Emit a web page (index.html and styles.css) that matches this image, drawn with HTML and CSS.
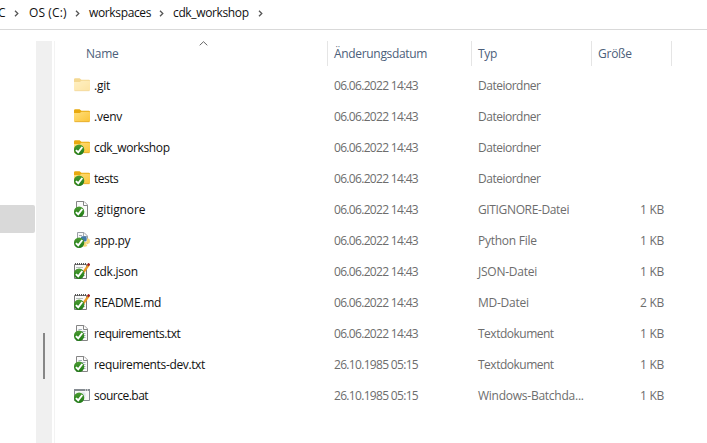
FILE: index.html
```
<!DOCTYPE html>
<html lang="de">
<head>
<meta charset="utf-8">
<title>cdk_workshop</title>
<link rel="stylesheet" href="styles.css">
</head>
<body>
<svg class="defs" aria-hidden="true">
  <defs>
    <linearGradient id="gold" x1="0" y1="0" x2="1" y2="1"><stop offset="0" stop-color="#ffdf7c"/><stop offset="1" stop-color="#fbc437"/></linearGradient>
    <linearGradient id="green" x1="0" y1="0" x2="0" y2="1"><stop offset="0" stop-color="#4c9c32"/><stop offset="1" stop-color="#1f7a16"/></linearGradient>
    <symbol id="folder" viewBox="0 0 16 16">
      <path d="M0 2.5Q0 1.2 1.3 1.2H5.6L7.4 2.8H14.8Q16 2.8 16 4V8H0Z" fill="#e8a90f"/>
      <path d="M0 5.1H5.8L7.6 3.7H15Q16 3.7 16 4.7V12.8Q16 14 14.8 14H1.2Q0 14 0 12.8Z" fill="url(#gold)"/>
      <path d="M.6 13.7H15.4" stroke="#dfa52b" stroke-width=".7"/>
    </symbol>
    <symbol id="check" viewBox="0 0 16 16">
      <circle cx="5.1" cy="10.7" r="5.2" fill="url(#green)"/>
      <path d="M1.9 11.1L4.2 13.3L8.3 8" fill="none" stroke="#fff" stroke-width="1.9"/>
    </symbol>
    <symbol id="page" viewBox="0 0 16 16">
      <path d="M2.5.5H10L13.5 4V15.5H2.5Z" fill="#fafafa" stroke="#858585"/>
      <path d="M9.5.5V4.5H13.5" fill="#fff" stroke="#858585"/>
    </symbol>
    <symbol id="lines" viewBox="0 0 16 16">
      <path d="M4.5 4.5H8M4.5 6.5H11.5M4.5 8.5H11.5M4.5 10.5H11.5M4.5 12.5H11.5" stroke="#a6b2bd"/>
    </symbol>
    <symbol id="python" viewBox="0 0 16 16">
      <path d="M3.5 9V.5H10L13.5 4V12" fill="#f7f8f9" stroke="#9a9fa5"/>
      <path d="M9.5.5V4.5H13.5M5 3.5H8" fill="none" stroke="#a5abb0"/>
      <path d="M7 5.2Q7 4.2 9 4.2H11Q12.7 4.2 12.7 6V8.2Q12.7 9.5 11 9.5H6V6.3H7Z" fill="#4179a8"/>
      <path d="M13 6.6H14.2Q16 6.8 16 9.2Q16 11.7 14.2 11.8H12V12.6H13.5Q13.5 14.8 11 14.8Q8.2 14.8 8.2 12.7V11Q8.2 9.9 10 9.9H11.5Q13 9.9 13 8Z" fill="#f5d77a"/>
    </symbol>
    <symbol id="notepad" viewBox="0 0 16 16">
      <path d="M.5 1.5H12.5V15.5H.5Z" fill="#fafafa" stroke="#777"/>
      <path d="M1 1H12.5" stroke="#555" stroke-width="1.8" stroke-dasharray="1 1"/>
      <path d="M2 4.5H9M2 6.5H8M8 10.5H11M8 12.5H11" stroke="#b9c0bd"/>
      <path d="M14.7 1.8L9.3 9.5" stroke="#e89b27" stroke-width="2.3"/>
      <path d="M15.3.5L13.9 2.7" stroke="#9e1f23" stroke-width="2.5"/>
      <path d="M9.7 8.7L8.6 10.5" stroke="#403d32" stroke-width="1"/>
    </symbol>
    <symbol id="batch" viewBox="0 0 16 16">
      <path d="M.5 2.5H15.5V13.5H.5Z" fill="#f8f8f8" stroke="#858b91"/>
      <path d="M0 3H16" stroke="#858b91" stroke-width="2"/>
      <path d="M11 3H12M13 3H14" stroke="#fff"/>
      <circle cx="9" cy="8" r="2.8" fill="#dfe7ec"/>
    </symbol>
  </defs>
</svg>

<nav class="address">
  <span class="crumb pc">C</span><svg class="chev" viewBox="0 0 5 7"><path d="M1 .7L3.8 3.5L1 6.3"/></svg>
  <span class="crumb drive">OS (C:)</span><svg class="chev" viewBox="0 0 5 7"><path d="M1 .7L3.8 3.5L1 6.3"/></svg>
  <span class="crumb spaces">workspaces</span><svg class="chev" viewBox="0 0 5 7"><path d="M1 .7L3.8 3.5L1 6.3"/></svg>
  <span class="crumb shop">cdk_workshop</span><svg class="chev" viewBox="0 0 5 7"><path d="M1 .7L3.8 3.5L1 6.3"/></svg>
</nav>
<div class="main">
  <aside class="tree"><div class="selected"></div></aside>
  <div class="scrollbar"><div class="thumb"></div></div>
  <section class="files">
    <header class="head">
      <span class="hname">Name<svg class="sort" viewBox="0 0 9 5"><path d="M.7 4.3L4.5.7L8.3 4.3"/></svg></span>
      <span class="hdate">Änderungsdatum</span><span class="htype">Typ</span><span class="hsize">Größe</span>
    </header>
    <div class="row"><svg class="icon faded"><use href="#folder"/></svg><span class="name">.git</span><span class="date">06.06.2022 14:43</span><span class="type tight">Dateiordner</span><span class="size"></span></div>
    <div class="row"><svg class="icon"><use href="#folder"/></svg><span class="name">.venv</span><span class="date">06.06.2022 14:43</span><span class="type tight">Dateiordner</span><span class="size"></span></div>
    <div class="row"><svg class="icon"><use href="#folder"/><use href="#check"/></svg><span class="name snug">cdk_workshop</span><span class="date">06.06.2022 14:43</span><span class="type tight">Dateiordner</span><span class="size"></span></div>
    <div class="row"><svg class="icon"><use href="#folder"/><use href="#check"/></svg><span class="name tight">tests</span><span class="date">06.06.2022 14:43</span><span class="type tight">Dateiordner</span><span class="size"></span></div>
    <div class="row"><svg class="icon"><use href="#page"/><use href="#check"/></svg><span class="name loose">.gitignore</span><span class="date">06.06.2022 14:43</span><span class="type snug">GITIGNORE-Datei</span><span class="size">1 KB</span></div>
    <div class="row"><svg class="icon"><use href="#python"/><use href="#check"/></svg><span class="name">app.py</span><span class="date">06.06.2022 14:43</span><span class="type">Python File</span><span class="size">1 KB</span></div>
    <div class="row"><svg class="icon"><use href="#notepad"/><use href="#check"/></svg><span class="name">cdk.json</span><span class="date">06.06.2022 14:43</span><span class="type">JSON-Datei</span><span class="size">1 KB</span></div>
    <div class="row"><svg class="icon"><use href="#notepad"/><use href="#check"/></svg><span class="name">README.md</span><span class="date">06.06.2022 14:43</span><span class="type">MD-Datei</span><span class="size">2 KB</span></div>
    <div class="row"><svg class="icon"><use href="#page"/><use href="#lines"/><use href="#check"/></svg><span class="name tight">requirements.txt</span><span class="date">06.06.2022 14:43</span><span class="type tight">Textdokument</span><span class="size">1 KB</span></div>
    <div class="row"><svg class="icon"><use href="#page"/><use href="#lines"/><use href="#check"/></svg><span class="name snug">requirements-dev.txt</span><span class="date">26.10.1985 05:15</span><span class="type tight">Textdokument</span><span class="size">1 KB</span></div>
    <div class="row"><svg class="icon"><use href="#batch"/><use href="#check"/></svg><span class="name tight">source.bat</span><span class="date">26.10.1985 05:15</span><span class="type">Windows-Batchda...</span><span class="size">1 KB</span></div>
  </section>
</div>
</body>
</html>
```
FILE: styles.css
```
* { box-sizing: border-box; }
body {
  margin: 0;
  width: 707px;
  height: 443px;
  overflow: hidden;
  background: #fff;
  color: #111;
  font: 12px/16px "Open Sans", "Noto Sans", sans-serif;
  letter-spacing: -0.25px;
  white-space: nowrap;
}
.defs { position: absolute; width: 0; height: 0; }
svg { flex: none; }
.snug { letter-spacing: -0.36px; }
.tight { letter-spacing: -0.5px; }
.loose { letter-spacing: -0.15px; }

.address {
  display: flex;
  align-items: center;
  height: 30px;
  padding-bottom: 3px;
  border-bottom: 1px solid #d9d9d9;
}
.crumb { flex: none; }
.pc { width: 16px; margin-left: -2px; }
.pc + .chev { margin-right: 10px; }
.drive { width: 46px; letter-spacing: 0.1px; }
.drive + .chev { margin-right: 9px; }
.spaces { width: 70px; letter-spacing: -0.36px; }
.spaces + .chev { margin-right: 9px; }
.shop { width: 85px; letter-spacing: -0.36px; }
.chev { width: 5px; height: 7px; margin-top: 1px; }
.chev path, .sort path { fill: none; stroke: #555; stroke-width: 1.3; }
.sort path { stroke-width: 0.9; }

.main { display: flex; height: 413px; padding-top: 11px; }
.tree { width: 36px; padding-top: 164px; }
.selected { width: 35px; height: 28px; background: #d9d9d9; border-radius: 0 2px 2px 0; }
.scrollbar { width: 16px; padding: 292px 0 0 7px; background: #f0f0f0; }
.thumb { width: 2px; height: 46px; background: #868686; }
.files { flex: 1; margin-left: 2px; border-left: 1px solid #f3f3f3; }

.head { display: flex; height: 25px; margin-bottom: 4px; line-height: 26px; color: #4c607a; }
.head span { border-right: 1px solid #e5e5e5; }
.hname { position: relative; width: 273px; padding-left: 31px; }
.sort { position: absolute; left: 144px; top: 0; width: 9px; height: 5px; }
.hdate { width: 144px; padding-left: 6px; letter-spacing: -0.32px; }
.htype { width: 120px; padding-left: 6px; }
.hsize { width: 80px; padding-left: 6px; }

.row { display: flex; align-items: center; height: 31px; padding-left: 19px; }
.icon { width: 16px; height: 16px; margin: 0 4px 1px 0; }
.faded { opacity: .45; }
.name { width: 240px; }
.date { width: 144px; color: #6d6d6d; letter-spacing: -0.68px; }
.type { width: 120px; color: #6d6d6d; }
.size { width: 66px; color: #6d6d6d; text-align: right; }
```
